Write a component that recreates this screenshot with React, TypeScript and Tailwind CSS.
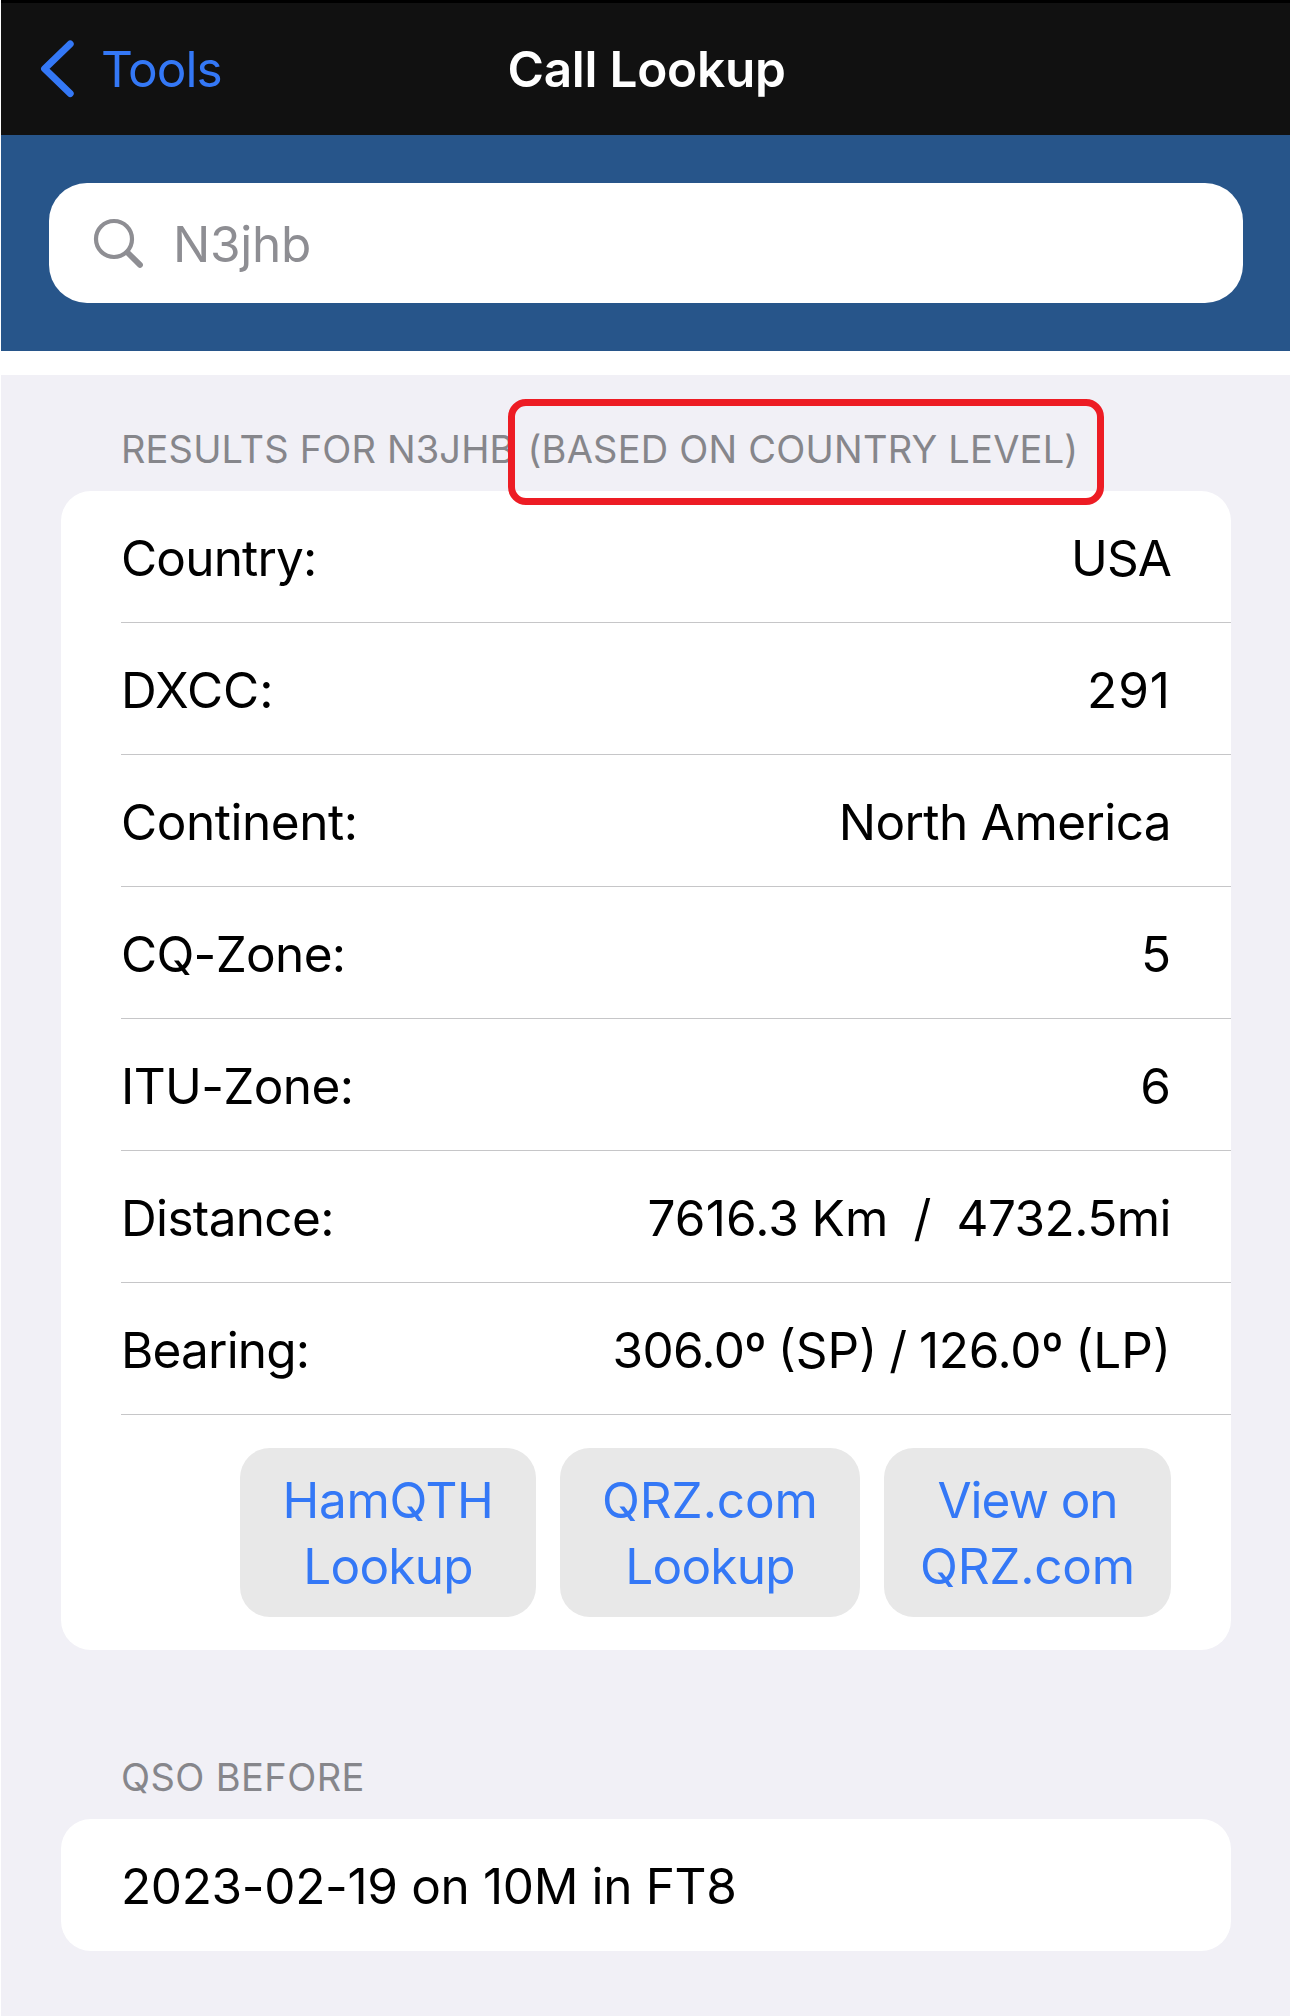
import type { ReactNode } from 'react';

type RowData = { label: string; labelClass: string; value: ReactNode; valueClass: string };

const rows: RowData[] = [
  { label: 'Country:', labelClass: 'tracking-[-0.81px]', value: 'USA', valueClass: 'tracking-[-0.9px]' },
  { label: 'DXCC:', labelClass: 'tracking-[-0.05px]', value: '291', valueClass: 'tracking-[1px]' },
  { label: 'Continent:', labelClass: 'tracking-[-0.45px]', value: 'North America', valueClass: 'tracking-[-0.6px]' },
  { label: 'CQ-Zone:', labelClass: 'tracking-[-0.7px]', value: '5', valueClass: '' },
  { label: 'ITU-Zone:', labelClass: 'tracking-[-0.64px]', value: '6', valueClass: '' },
  {
    label: 'Distance:',
    labelClass: 'tracking-[-0.66px]',
    value: (
      <>
        <span className="tracking-[0.15px]">7616.3 Km</span>
        {'  /  '}
        <span className="tracking-[-0.55px]">4732.5mi</span>
      </>
    ),
    valueClass: 'whitespace-pre [word-spacing:-1.4px]',
  },
  {
    label: 'Bearing:',
    labelClass: 'tracking-[-0.82px]',
    value: (
      <>
        <span className="tracking-[-0.67px]">306.0º</span> (SP) / <span className="tracking-[-0.24px]">126.0º</span> (LP)
      </>
    ),
    valueClass: 'whitespace-pre [word-spacing:-2px]',
  },
];

function Row({ label, labelClass, value, valueClass }: RowData) {
  return (
    <div className="ml-[60px] flex h-[132px] items-center justify-between border-b border-[#c6c6c8] pt-[3px] pr-[60px]">
      <span className={labelClass}>{label}</span>
      <span className={valueClass}>{value}</span>
    </div>
  );
}

function LookupButton({ width, lines }: { width: string; lines: [ReactNode, ReactNode] }) {
  return (
    <button className={`${width} flex h-[169px] flex-col items-center justify-center rounded-[30px] bg-[#e8e8e8] pt-px leading-[66px] text-[#3478f6]`}>
      <span>{lines[0]}</span>
      <span>{lines[1]}</span>
    </button>
  );
}

export default function App() {
  return (
    <div className="h-[2016px] w-[1290px] overflow-hidden bg-white pl-px font-['Inter','Liberation_Sans',sans-serif] text-[49.5px] leading-[60px] text-black">
      <header className="grid h-[135px] grid-cols-[1fr_auto_1fr] items-center border-t-[3px] border-black bg-[#111111]">
        <a className="flex items-center pl-[36px] text-[#3478f6]">
          <svg className="h-[64px] w-[40px]" viewBox="37 37 40 64" fill="none" stroke="currentColor" strokeWidth="7" strokeLinecap="round" strokeLinejoin="round">
            <path d="M70.2 43.9 44.6 68.8 70.2 93.5" />
          </svg>
          <span className="ml-[24px] tracking-[-0.98px]">Tools</span>
        </a>
        <h1 className="pl-[2px] font-semibold tracking-[-0.25px] text-white">Call Lookup</h1>
      </header>

      <div className="h-[216px] bg-[#27558a] pt-12 pr-[47px] pl-12">
        <div className="flex h-[120px] items-center rounded-[38px] bg-white pl-[41px] text-[#8e8e93]">
          <svg className="h-[56px] w-[56px]" viewBox="90 215 56 56" fill="none" stroke="currentColor" strokeLinecap="round">
            <circle cx="114" cy="239" r="18" strokeWidth="4.2" />
            <path d="M127.5 252.5 140 264.9" strokeWidth="5.8" />
          </svg>
          <span className="ml-[27px] pt-[2px] tracking-[-0.28px]">N3jhb</span>
        </div>
      </div>

      <main className="mt-6 h-[1641px] bg-[#f1f0f6] pt-8 pr-[59px] pl-[60px]">
        <h2 className="flex h-[84px] items-center pl-[60px] text-[38px] whitespace-pre text-[#86868b]">
          <span className="tracking-[0.16px]">RESULTS FOR N3JHB </span>
          <span className="relative z-10 ml-[2px] tracking-[0.22px]">
            (BASED ON COUNTRY LEVEL)
            <span className="absolute -top-[20px] -left-[19px] h-[106px] w-[596px] rounded-[18px] border-[7px] border-[#ed1c24]" />
          </span>
        </h2>
        <section className="h-[1159px] rounded-[30px] bg-white">
          {rows.map((row) => (
            <Row key={row.label} {...row} />
          ))}
          <div className="flex justify-end gap-6 pt-[33px] pr-[60px]">
            <LookupButton
              width="w-[296px]"
              lines={[<span className="tracking-[-0.37px]">HamQTH</span>, <span className="tracking-[-0.8px]">Lookup</span>]}
            />
            <LookupButton
              width="w-[300px]"
              lines={[<span className="tracking-[-0.09px]">QRZ.com</span>, <span className="tracking-[-0.8px]">Lookup</span>]}
            />
            <LookupButton
              width="w-[287px]"
              lines={[<span className="tracking-[-1.05px]">View on</span>, <span className="tracking-[-0.2px]">QRZ.com</span>]}
            />
          </div>
        </section>

        <h2 className="mt-[85px] flex h-[84px] items-center pl-[60px] text-[38px] tracking-[0.41px] text-[#86868b]">QSO BEFORE</h2>
        <section className="flex h-[132px] items-center rounded-[30px] bg-white pt-[2px] pl-[60px] tracking-[-0.34px]">
          2023-02-19 on 10M in FT8
        </section>
      </main>
    </div>
  );
}
